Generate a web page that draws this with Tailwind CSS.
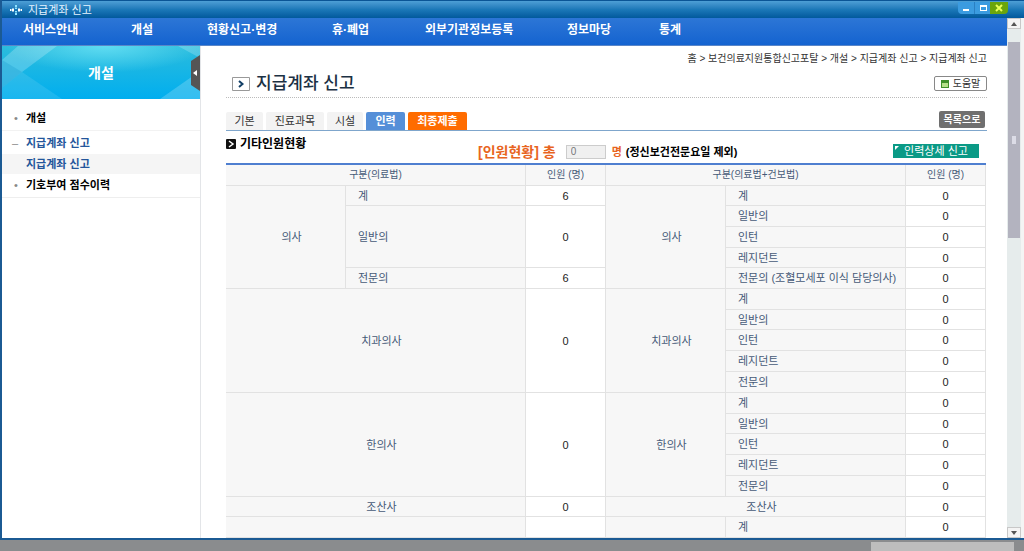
<!DOCTYPE html>
<html lang="ko">
<head>
<meta charset="utf-8">
<title>지급계좌 신고</title>
<script src="https://cdn.jsdelivr.net/npm/@tailwindcss/browser@4"></script>
</head>
<body class="flex h-screen flex-col overflow-hidden bg-[#8a8c8e] font-['Liberation_Sans','Noto_Sans_CJK_KR',sans-serif] text-[11px] leading-4 text-[#333]">
<div class="flex min-h-0 flex-1 flex-col border-b-2 border-l-2 border-[#1b5a93] bg-white">
  <header class="flex h-[18px] shrink-0 items-center border-t border-[#0a5596] bg-linear-to-b from-[#4d9fd6] via-[#1b78b8] to-[#02599c] pl-2 pr-4 text-[#e6f4ff]">
    <svg class="mr-1.5 size-3" viewBox="0 0 12 12" fill="#fff"><path d="M5 1h2v2H5zM5 9h2v2H5z" fill="#8fe4ff"/><path d="M5 3.500h2V5H5zM5 7h2v1.500H5z" fill="#8fe4ff"/><path d="M0 5h1.500v2H0zM2 4.500h2v3H2zM8 4.500h2v3H8zM10.500 5H12v2h-1.500z"/></svg>
    <span class="flex-1">지급계좌 신고</span>
    <div class="flex h-full items-start pt-px">
      <button aria-label="최소화" class="flex h-3 w-4 items-center justify-center rounded-bl-sm bg-[#3b9be0]"><svg class="h-2 w-3" viewBox="0 0 12 8"><path d="M3 5h6v2H3z" fill="#fff"/></svg></button>
      <button aria-label="최대화" class="flex h-3 w-4 items-center justify-center border-l border-[#2a7fc2] bg-[#3b9be0]"><svg class="h-2 w-3" viewBox="0 0 12 8"><path d="M3 1h7v6H3zM4 3v3h5V3z" fill="#fff" fill-rule="evenodd"/></svg></button>
      <button aria-label="닫기" class="flex h-3 w-[18px] items-center justify-center rounded-br-sm bg-[#6aa50c]"><svg class="h-2 w-3" viewBox="0 0 12 8"><path d="M3 1l6 6M9 1L3 7" stroke="#e8ff5a" stroke-width="2"/></svg></button>
    </div>
  </header>
  <div class="flex min-h-0 flex-1">
    <div class="flex min-w-0 flex-1 flex-col">
      <nav class="flex h-7 shrink-0 items-center border-b border-[#5a86c8] bg-linear-to-b from-[#2c76d6] to-[#1363d0] pb-1 pl-[21px] text-xs font-bold text-white">
        <a href="#" class="w-[108px]">서비스안내</a>
        <a href="#" class="w-[76px]">개설</a>
        <a href="#" class="w-[125px]">현황신고·변경</a>
        <a href="#" class="w-[93px]">휴·폐업</a>
        <a href="#" class="w-[142px]">외부기관정보등록</a>
        <a href="#" class="w-[92px]">정보마당</a>
        <a href="#">통계</a>
      </nav>
      <div class="flex min-h-0 flex-1">
        <aside class="w-[199px] shrink-0 border-r border-[#e3e5e8]">
          <div class="relative flex h-[53px] items-center justify-center bg-[#13b0e4] text-sm font-bold text-white">
            <svg class="absolute inset-0 size-full" viewBox="0 0 198 53" preserveAspectRatio="none" aria-hidden="true">
              <defs>
                <linearGradient id="sky" x1="0" y1="0" x2="0" y2="1"><stop offset="0" stop-color="#2cbcdc"/><stop offset="1" stop-color="#00aeef"/></linearGradient>
                <radialGradient id="glow" cx=".52" cy="0" r=".5"><stop offset="0" stop-color="#5fdcf2"/><stop offset="1" stop-color="#5fdcf2" stop-opacity="0"/></radialGradient>
              </defs>
              <path d="M0 0h198v53H0z" fill="url(#sky)"/>
              <path d="M0 0h198v53H0z" fill="url(#glow)"/>
              <path d="M0 14L16 0H55L20 26 0 42z" fill="#fff" opacity=".22"/>
              <path d="M0 14l20 12L0 42z" fill="#0a8fc8" opacity=".25"/>
              <path d="M20 26l40 27H0V42z" fill="#fff" opacity=".1"/>
              <path d="M158 53l40-28v28zM176 0l22 12V0z" fill="#fff" opacity=".2"/>
            </svg>
            <span class="relative">개설</span>
            <button aria-label="메뉴 접기" class="absolute right-0 top-[9px]"><svg class="h-9 w-[9px]" viewBox="0 0 9 36"><path d="M9 0L0 6v24l9 6z" fill="#555"/><path d="M6 15v6l-4-3z" fill="#fff"/></svg></button>
          </div>
          <ul class="pt-[7px] font-bold text-black">
            <li class="flex h-6 items-center"><span class="w-6 pl-3 font-normal text-[#888]">•</span><a href="#">개설</a></li>
            <li class="flex h-6 items-center border-t border-[#f2f2f2] text-[#24569b]"><span class="w-6 pl-2.5 font-normal text-[#888]">–</span><a href="#">지급계좌 신고</a></li>
            <li class="flex h-5 items-center bg-[#f5f5f5] pl-6 text-[#24569b]"><a href="#">지급계좌 신고</a></li>
            <li class="flex h-6 items-center border-b border-[#eee] pb-0.5"><span class="w-6 pl-3 font-normal text-[#888]">•</span><a href="#">기호부여 점수이력</a></li>
          </ul>
        </aside>
        <main class="min-w-0 flex-1 overflow-hidden pl-[25px] pr-5 pt-[5px]">
          <p class="text-right text-[10px]">홈 &gt; 보건의료지원통합신고포탈 &gt; 개설 &gt; 지급계좌 신고 &gt; 지급계좌 신고</p>
          <div class="mb-[13px] mt-[7px] flex h-6 items-center border-b border-dotted border-[#bbb] pb-1 pl-1.5">
            <svg class="mr-1.5 h-[14px] w-[18px]" viewBox="0 0 18 14"><path d="M.5.5h17v13H.5z" fill="#fff" stroke="#999"/><path d="M7 4l3.500 3L7 10" fill="none" stroke="#123f66" stroke-width="2"/></svg>
            <h1 class="flex-1 text-[17px] font-medium leading-5 text-[#1c3144]">지급계좌 신고</h1>
            <button class="flex h-[15px] w-[53px] items-center justify-center gap-1 rounded-xs border border-[#888] bg-white text-[10px]"><svg class="size-2" viewBox="0 0 8 8"><path d="M0 0h8v8H0z" fill="#3f8f2a"/><path d="M1 3h6v4H1z" fill="#b5e08a"/></svg>도움말</button>
          </div>
          <div class="flex h-5 items-end gap-[3px] border-b border-[#7fa6cc] pr-0.5">
            <button class="h-[18px] w-[37px] rounded-t-xs bg-[#f3f3f3]">기본</button>
            <button class="h-[18px] w-[58px] rounded-t-xs bg-[#f3f3f3]">진료과목</button>
            <button class="h-[18px] w-[36px] rounded-t-xs bg-[#f3f3f3]">시설</button>
            <button class="h-[18px] w-[39px] rounded-t-xs bg-[#558fd8] font-bold text-white">인력</button>
            <button class="h-[18px] w-[59px] rounded-t-xs bg-[#ff6c00] font-bold text-white">최종제출</button>
            <button class="mb-0.5 ml-auto h-[17px] w-[46px] rounded-xs bg-[#6f6f6f] text-[10px] font-bold text-white">목록으로</button>
          </div>
          <div class="flex h-8 items-start pt-[5px]">
            <h2 class="flex w-[252px] items-center text-xs font-bold leading-4 text-black"><svg class="mr-1 size-2.5" viewBox="0 0 10 10"><rect width="10" height="10" rx="1" fill="#111"/><path d="M3 2l4 3-4 3" fill="none" stroke="#fff" stroke-width="1.500"/></svg>기타인원현황</h2>
            <div class="mt-1.5 flex h-5 flex-1 items-center font-bold text-black">
              <label for="total" class="text-sm leading-5 text-[#e8651f]">[인원현황] 총</label>
              <input id="total" value="0" readonly class="mx-2.5 mr-1.5 h-[14px] w-10 border border-[#ccc] bg-[#f0f0f0] px-1 text-[10px] font-normal text-[#777]">
              <span class="mr-1 text-[#e8651f]">명</span>(정신보건전문요일 제외)
            </div>
            <button class="relative mr-2 mt-2 h-[14px] w-[86px] bg-[#0a9a86] leading-[14px] text-white">인력상세 신고<svg class="absolute left-0.5 top-0.5 size-1" viewBox="0 0 4 4"><path d="M0 0h4L0 4z" fill="#fff"/></svg></button>
          </div>
          <table class="w-[calc(100%-1px)] table-fixed border-separate border-spacing-0 border-t-2 border-[#4f7fd0] text-[#465a78] [&_td]:border-b [&_td]:border-r [&_td]:border-[#e2e2e2] [&_td]:bg-white [&_td]:p-0 [&_td]:text-center [&_td]:text-[#222] [&_th]:border-b [&_th]:border-r [&_th]:border-[#e2e2e2] [&_th]:bg-[#f7f7f7] [&_th]:py-0 [&_th]:font-normal">
            <colgroup><col class="w-[120px]"><col><col class="w-20"><col class="w-[120px]"><col><col class="w-20"></colgroup>
            <thead>
              <tr class="h-[21px] text-[10px]"><th colspan="2">구분(의료법)</th><th>인원 (명)</th><th colspan="2">구분(의료법+건보법)</th><th>인원 (명)</th></tr>
            </thead>
            <tbody class="[&_th]:pl-3">
              <tr class="h-5"><th rowspan="5">의사</th><th class="text-left">계</th><td>6</td><th rowspan="5">의사</th><th class="text-left">계</th><td>0</td></tr>
              <tr class="h-[21px]"><th rowspan="3" class="text-left">일반의</th><td rowspan="3">0</td><th class="text-left">일반의</th><td>0</td></tr>
              <tr class="h-[21px]"><th class="text-left">인턴</th><td>0</td></tr>
              <tr class="h-5"><th class="text-left">레지던트</th><td>0</td></tr>
              <tr class="h-[21px]"><th class="text-left">전문의</th><td>6</td><th class="whitespace-nowrap text-left">전문의 (조혈모세포 이식 담당의사)</th><td>0</td></tr>
              <tr class="h-[21px]"><th colspan="2" rowspan="5">치과의사</th><td rowspan="5">0</td><th rowspan="5">치과의사</th><th class="text-left">계</th><td>0</td></tr>
              <tr class="h-5"><th class="text-left">일반의</th><td>0</td></tr>
              <tr class="h-[21px]"><th class="text-left">인턴</th><td>0</td></tr>
              <tr class="h-[21px]"><th class="text-left">레지던트</th><td>0</td></tr>
              <tr class="h-[21px]"><th class="text-left">전문의</th><td>0</td></tr>
              <tr class="h-[21px]"><th colspan="2" rowspan="5">한의사</th><td rowspan="5">0</td><th rowspan="5">한의사</th><th class="text-left">계</th><td>0</td></tr>
              <tr class="h-5"><th class="text-left">일반의</th><td>0</td></tr>
              <tr class="h-[21px]"><th class="text-left">인턴</th><td>0</td></tr>
              <tr class="h-[21px]"><th class="text-left">레지던트</th><td>0</td></tr>
              <tr class="h-[21px]"><th class="text-left">전문의</th><td>0</td></tr>
              <tr class="h-5"><th colspan="2">조산사</th><td>0</td><th colspan="2">조산사</th><td>0</td></tr>
              <tr class="h-[21px]"><th colspan="2"></th><td></td><th></th><th class="text-left">계</th><td>0</td></tr>
            </tbody>
          </table>
        </main>
      </div>
    </div>
    <div class="flex w-[17px] shrink-0 flex-col border-r-3 border-[#f4f4f4] bg-[#e6ecec]" aria-hidden="true">
      <div class="flex h-[11px] items-center justify-center border border-[#c8c8c8] bg-[#f4f4f4]"><svg class="h-1 w-1.5" viewBox="0 0 6 4"><path d="M0 4l3-4 3 4z" fill="#555"/></svg></div>
      <div class="mx-px mt-[13px] flex h-[196px] items-center justify-center bg-[#b3b3bf]"><span class="h-2 w-1 bg-[#dcdce6]"></span></div>
      <div class="mt-auto flex h-[11px] items-center justify-center border border-[#c8c8c8] bg-[#f4f4f4]"><svg class="h-1 w-1.5" viewBox="0 0 6 4"><path d="M0 0l3 4 3-4z" fill="#555"/></svg></div>
    </div>
  </div>
</div>
<div class="flex h-[11px] shrink-0 justify-end pr-[10px] pt-0.5" aria-hidden="true"><div class="w-[143px] bg-[#bdbdbd]"></div></div>
</body>
</html>
